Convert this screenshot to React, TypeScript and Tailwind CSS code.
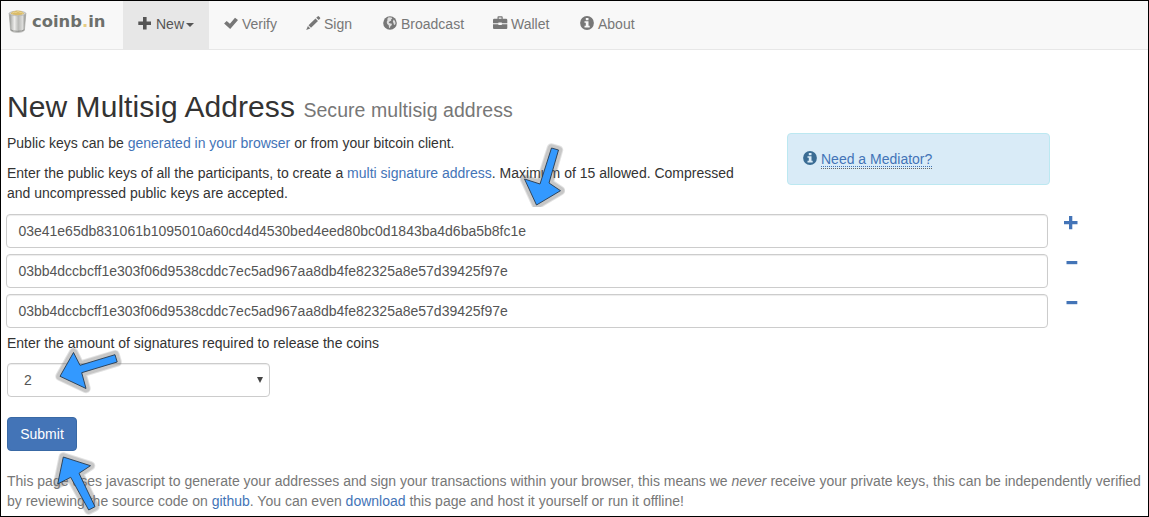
import React from "react";

const icon = "block h-[14px] w-[14px] shrink-0 overflow-visible";

const PlusIcon = () => (
  <svg viewBox="0 0 14 14" className={icon} fill="currentColor">
    <path d="M5 1h3.6v4.6H13v3.4H8.600V13.400H5V9H.3V5.600H5z" />
  </svg>
);

const CheckIcon = () => (
  <svg viewBox="0 0 14 14" className={icon} fill="currentColor">
    <path d="M11 1.800 14 4 6.200 13 .1 7.600 2.700 5.100 5.900 7.800z" />
  </svg>
);

const PencilIcon = () => (
  <svg viewBox="0 0 14 14" className={icon} fill="currentColor">
    <path d="M10.200 1.700 11.600.4q.7-.6 1.400 0l1 1q.7.700 0 1.400L12.700 4.100zM9.500 2.400 12 4.900 5 11.800 2.500 9.300zM1.900 10 4.300 12.400.2 14z" />
  </svg>
);

const GlobeIcon = () => (
  <svg viewBox="0 0 14 14" className={icon}>
    <circle cx="7" cy="7" r="6.800" fill="currentColor" />
    <path
      d="M5.600 1.300 8.600 1.500 9.300 2.700 8 3.600 8.200 4.700 6.800 5.200 5.600 6.500 6.700 7.300 8.900 7.800 8.700 9.200 7.400 10.300 6.900 12.300 6 11.500 5.700 9.300 4.200 8 3.700 6 4.500 4.300 4.300 2.800zM10.600 3.500 12 5 12.600 7.200 11.900 9 10.800 8.400 10.500 7 9.800 5.800z"
      fill="#f8f8f8"
      fillOpacity=".8"
    />
  </svg>
);

const BriefcaseIcon = () => (
  <svg viewBox="0 0 14 14" className={icon} fill="currentColor">
    <path
      fillRule="evenodd"
      d="M4.500 2.800V1.100Q4.500.2 5.400.2h3.400q.9 0 .9.900v1.700h3.400q1.200 0 1.200 1.200v3.300H8.800V6.500H5.400v.8H0V4q0-1.200 1.200-1.200zM5.700 2.800h2.800V1.400H5.700zM0 8.200h5.400v.8h3.400v-.8h5.500v3.900q0 1-1 1H1q-1 0-1-1z"
    />
  </svg>
);

const InfoIcon = ({ hole }: { hole: string }) => (
  <svg viewBox="0 0 14 14" className={icon}>
    <circle cx="7" cy="7" r="6.900" fill="currentColor" />
    <path d="M5.800 2h2.700v2.200H5.800zM4.500 5.200h4v4.500h1.200v1.700H4.500V9.700h1.300V6.800H4.500z" fill={hole} />
  </svg>
);

const Logo = () => (
  <a className="flex w-[122px] shrink-0 items-start pl-[7px] pt-2">
    <svg viewBox="0 0 19 25" className="block h-[24px] w-[19px]">
      <defs>
        <linearGradient id="pail" x1="0" x2="1" y1="0" y2="0">
          <stop offset="0" stopColor="#8b8d89" />
          <stop offset=".16" stopColor="#c4c5c2" />
          <stop offset=".32" stopColor="#ececea" />
          <stop offset=".55" stopColor="#b9bab7" />
          <stop offset=".8" stopColor="#dcdcda" />
          <stop offset="1" stopColor="#858783" />
        </linearGradient>
      </defs>
      <path d="M.8 4.500 2.300 22q1.100 2.300 7.200 2.300t7.200-2.300L18.200 4.500z" fill="url(#pail)" stroke="#a2a3a0" strokeWidth=".7" />
      <ellipse cx="9.500" cy="4.600" rx="8.700" ry="2.400" fill="#d6d7d3" stroke="#aaa" strokeWidth=".6" />
      <path d="M2.200 4.900 4 2.800 6 2.300 8.500 1.500l3 .4 2.300.5 2.800 2.400q-2.800 1.800-7.200 1.700T2.200 4.900" fill="#d9bb6a" />
      <path d="m4 4.300 2-1 2 .4 2-1.200 2 1 2 .2 1.400 1" stroke="#eedb9c" strokeWidth=".8" fill="none" />
      <path d="M2.500 21.700q2 1.500 7 1.500t7-1.500" stroke="#80827e" strokeWidth=".8" fill="none" />
    </svg>
    <span className="ml-[5px] mt-[3px] font-['DejaVu_Sans'] text-[16.4px] leading-5 font-bold text-[#6d706c]">
      coinb<span className="text-[#e6cd83]">.</span>in
    </span>
  </a>
);

const navItems = [
  { label: "Verify", Icon: CheckIcon, width: "w-[82px]" },
  { label: "Sign", Icon: PencilIcon, width: "w-[77px]" },
  { label: "Broadcast", Icon: GlobeIcon, width: "w-[110px]" },
  { label: "Wallet", Icon: BriefcaseIcon, width: "w-[87px]" },
];

const keys = [
  "03e41e65db831061b1095010a60cd4d4530bed4eed80bc0d1843ba4d6ba5b8fc1e",
  "03bb4dccbcff1e303f06d9538cddc7ec5ad967aa8db4fe82325a8e57d39425f97e",
  "03bb4dccbcff1e303f06d9538cddc7ec5ad967aa8db4fe82325a8e57d39425f97e",
];

const Link = ({ children }: { children: React.ReactNode }) => <a className="text-[#4374b7]">{children}</a>;

const Arrow = ({ points }: { points: string }) => (
  <g strokeLinejoin="round">
    <polygon points={points} fill="none" stroke="#707070" strokeOpacity=".2" strokeWidth="9.500" />
    <polygon points={points} fill="none" stroke="#707070" strokeOpacity=".23" strokeWidth="7.500" />
    <polygon points={points} fill="#3399ff" stroke="#26394d" strokeWidth=".9" />
  </g>
);

export default function App() {
  return (
    <div className="relative h-[517px] w-[1149px] overflow-hidden border border-black bg-white font-['Liberation_Sans',Arial,sans-serif] text-sm leading-5 text-[#333]">
      <nav className="flex h-[49px] border-b border-[#e7e7e7] bg-[#f8f8f8] text-[#777]">
        <Logo />
        <a className="flex w-[86px] items-start bg-[#e7e7e7] pt-[13px] pl-[15px] text-[#555]">
          <span className="mt-[2px]"><PlusIcon /></span>
          <span className="ml-[4px]">New</span>
          <svg viewBox="0 0 8 4" className="mt-[9px] ml-[2px] h-1 w-2" fill="currentColor"><path d="M0 0h8L4 4z" /></svg>
        </a>
        {navItems.map(({ label, Icon, width }) => (
          <a key={label} className={`flex items-start pt-[13px] pl-[15px] ${width}`}>
            <span className="mt-[2px]"><Icon /></span>
            <span className="ml-[4px]">{label}</span>
          </a>
        ))}
        <a className="flex items-start pt-[13px] pl-[15px]">
          <span className="mt-[2px]"><InfoIcon hole="#f8f8f8" /></span>
          <span className="ml-[4px]">About</span>
        </a>
      </nav>

      <main className="pt-10 pl-[6px]">
        <h2 className="text-[30px] leading-[33px] tracking-[0.06px] whitespace-nowrap">
          New Multisig Address <small className="text-[19.5px] leading-none text-[#777]">Secure multisig address</small>
        </h2>

        <div className="mt-[10px] flex h-[81px] items-start">
          <div className="w-[780px] whitespace-nowrap">
            <p>Public keys can be <Link>generated in your browser</Link> or from your bitcoin client.</p>
            <p className="mt-[10px]">
              Enter the public keys of all the participants, to create a <Link>multi signature address</Link>. Maximum of 15 allowed. Compressed
              <br />
              and uncompressed public keys are accepted.
            </p>
          </div>
          <div className="flex h-[52px] w-[263px] items-start rounded border border-[#bce8f1] bg-[#d9ebf7] pt-[15px] pl-[15px] text-[#3a6c94]">
            <span className="mt-[2px]"><InfoIcon hole="#d9ebf7" /></span>
            <span className="ml-[4px] flex h-[20px] flex-col border-b border-dotted border-[#666]">
              <a className="h-[18px] border-b border-dotted border-[#4374b7] text-[#4374b7]">Need a Mediator?</a>
            </span>
          </div>
        </div>

        <div className="-ml-px flex flex-col gap-[6px]">
          {keys.map((value, i) => (
            <div key={i} className="flex h-[34px]">
              <div className="w-[1042px] rounded border border-[#ccc] px-[11.4px] py-[6px] text-[#555] shadow-[inset_0_1px_1px_rgba(0,0,0,0.075)]">
                {value}
              </div>
              <svg viewBox="0 0 14 14" className="mt-[2px] ml-4 h-[14px] w-[14px]" fill="#4374b7">
                {i === 0 ? <path d="M5 0h3.300v5H13.500v3.200H8.300V13.200H5V8.200H0V5h5z" /> : <path d="M2.500 5h10.800v3.200H2.500z" />}
              </svg>
            </div>
          ))}
        </div>

        <p className="mt-[5px]">Enter the amount of signatures required to release the coins</p>
        <div className="mt-[10px] flex h-[34px] w-[263px] justify-between rounded border border-[#ccc] py-[6px] pr-[6px] pl-4 text-[#555] shadow-[inset_0_1px_1px_rgba(0,0,0,0.075)]">
          <span>2</span>
          <svg viewBox="0 0 6 6" className="mt-[7px] h-[6px] w-[6px]" fill="#444"><path d="M0 0h6L3 6z" /></svg>
        </div>
        <button className="mt-5 block h-[34px] w-[70px] rounded border border-[#3969a5] bg-[#4374b7] text-center text-white">
          Submit
        </button>
        <p className="mt-5 whitespace-nowrap text-[#777]">
          This page uses javascript to generate your addresses and sign your transactions within your browser, this means we <em>never</em> receive your private keys, this can be independently verified
          <br />
          by reviewing the source code on <Link>github</Link>. You can even <Link>download</Link> this page and host it yourself or run it offline!
        </p>
      </main>

      <svg viewBox="1 1 1147 515" className="pointer-events-none absolute top-0 left-0 h-[515px] w-[1147px]">
        <clipPath id="tip"><rect x="519" y="140" width="46" height="67" /></clipPath>
        <g clipPath="url(#tip)">
          <Arrow points="551.5,148 558.500,150 549,183 560.500,190.700 536.500,205 524.500,179 540,184" />
        </g>
        <Arrow points="60,376.300 73.500,352.500 80,365.300 115,354.700 117.200,362 81.700,372.700 86,388.500" />
        <Arrow points="63.300,457 90.500,465.700 79,473.300 95,506.700 88.700,510 70.700,477.300 57.700,484" />
      </svg>
    </div>
  );
}
